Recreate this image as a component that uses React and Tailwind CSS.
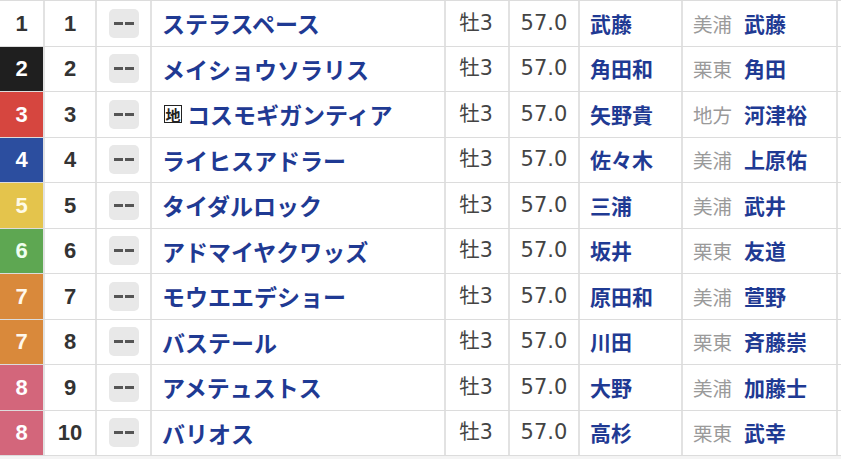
import React from "react";

const rows = [
  { w: 1, n: 1, name: "ステラスペース", j: "武藤", s: "美浦", t: "武藤" },
  { w: 2, n: 2, name: "メイショウソラリス", j: "角田和", s: "栗東", t: "角田" },
  { w: 3, n: 3, name: "コスモギガンティア", chi: true, j: "矢野貴", s: "地方", t: "河津裕" },
  { w: 4, n: 4, name: "ライヒスアドラー", j: "佐々木", s: "美浦", t: "上原佑" },
  { w: 5, n: 5, name: "タイダルロック", j: "三浦", s: "美浦", t: "武井" },
  { w: 6, n: 6, name: "アドマイヤクワッズ", j: "坂井", s: "栗東", t: "友道" },
  { w: 7, n: 7, name: "モウエエデショー", j: "原田和", s: "美浦", t: "萱野" },
  { w: 7, n: 8, name: "バステール", j: "川田", s: "栗東", t: "斉藤崇" },
  { w: 8, n: 9, name: "アメテュストス", j: "大野", s: "美浦", t: "加藤士" },
  { w: 8, n: 10, name: "バリオス", j: "高杉", s: "栗東", t: "武幸" },
];

const frame = {
  1: "bg-white text-[#333]",
  2: "bg-[#1f1f1f] text-white",
  3: "bg-[#d6463f] text-white",
  4: "bg-[#2c4e9f] text-white",
  5: "bg-[#e4c44c] text-[#fffbe6]",
  6: "bg-[#5ea752] text-[#f0fff0]",
  7: "bg-[#d9893b] text-[#fff8ec]",
  8: "bg-[#d3667b] text-white",
};

const latin = { fontFamily: '"Liberation Sans", "Noto Sans CJK JP", sans-serif' };
const dv = { fontFamily: '"DejaVu Sans", "Noto Sans CJK JP", sans-serif' };
const jp = { fontFamily: '"Noto Sans CJK JP", sans-serif' };

export default function App() {
  return (
    <div className="w-[841px] h-[459px] overflow-hidden bg-[#f4f4f4]">
      <div className="w-[841px] border-t border-[#dcdcdc] bg-white">
        {rows.map((r, i) => (
          <div key={i} className="flex h-[45.5px] border-b border-[#dcdcdc]">
            <div
              className={`w-[45px] shrink-0 border-r-2 border-[#e2e2e2] flex items-center justify-center text-[22px] font-bold ${frame[r.w]}`}
              style={latin}
            >
              {r.w}
            </div>
            <div
              className="w-[52px] shrink-0 border-r-2 border-[#e2e2e2] flex items-center justify-center text-[22px] font-bold text-[#333]"
              style={latin}
            >
              {r.n}
            </div>
            <div className="w-[55px] shrink-0 border-r-2 border-[#e2e2e2] flex items-center justify-center">
              <div className="w-[30px] h-[29px] rounded-[5px] bg-[#e8e8e8] flex items-center justify-center gap-[2px] pl-[1px]">
                <span className="block w-[9px] h-[3px] bg-[#555]" />
                <span className="block w-[9px] h-[3px] bg-[#555]" />
              </div>
            </div>
            <div
              className="w-[294px] shrink-0 border-r-2 border-[#e2e2e2] flex items-center pl-[10px] text-[23px] font-bold text-[#1f3a93] whitespace-nowrap"
              style={jp}
            >
              {r.chi && (
                <span className="ml-[2px] mr-[5px] inline-flex items-center justify-center w-[18px] h-[18px] border-[1.5px] border-[#222] text-[15px] leading-none font-bold text-[#222]">
                  地
                </span>
              )}
              {r.name}
            </div>
            <div
              className="w-[64px] shrink-0 border-r-2 border-[#e2e2e2] flex items-center justify-center pr-[2px] text-[20.5px] text-[#444]"
              style={dv}
            >
              牡3
            </div>
            <div
              className="w-[70px] shrink-0 border-r-2 border-[#e2e2e2] flex items-center justify-center text-[21px] text-[#444]"
              style={dv}
            >
              57.0
            </div>
            <div
              className="w-[103px] shrink-0 border-r-2 border-[#e2e2e2] flex items-center pl-[10px] text-[21px] font-bold text-[#1f3a93] whitespace-nowrap"
              style={jp}
            >
              {r.j}
            </div>
            <div
              className="w-[155px] shrink-0 border-r-2 border-[#e2e2e2] flex items-center pl-[10px] whitespace-nowrap"
              style={jp}
            >
              <span className="text-[19.5px] text-[#9a9a9a]">{r.s}</span>
              <span className="ml-[12px] text-[21px] font-bold text-[#1f3a93]">{r.t}</span>
            </div>
            <div className="flex-1" />
          </div>
        ))}
      </div>
    </div>
  );
}
